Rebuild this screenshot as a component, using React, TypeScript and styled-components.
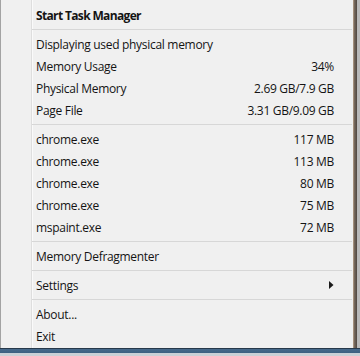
import React from 'react';
import styled, { createGlobalStyle } from 'styled-components';

const GlobalStyle = createGlobalStyle`
  html, body {
    margin: 0;
    padding: 0;
    background: #c2c2c2;
  }
`;

const Screen = styled.div`
  width: 360px;
  height: 356px;
  display: grid;
  grid-template-rows: 348px 1fr;
  overflow: hidden;
  font-family: "Open Sans", "Noto Sans", sans-serif;
`;

const Top = styled.div`
  display: flex;
`;

const Menu = styled.div`
  width: 352px;
  border-left: 1px solid #a3a3a3;
  border-right: 1px solid #a38f7c;
  background: #f0f0f0;
  display: flex;
`;

const Gutter = styled.div`
  width: 30px;
  border-right: 1px solid #dedede;
  box-shadow: 1px 0 0 #fafafa;
`;

const List = styled.div`
  flex: 1;
  padding: 4px 0 1px 0;
  display: flex;
  flex-direction: column;
`;

const Item = styled.div<{ $bold?: boolean }>`
  height: 22px;
  display: flex;
  align-items: center;
  justify-content: space-between;
  padding: 0 19px 0 4px;
  font-size: 12px;
  letter-spacing: ${(p) => (p.$bold ? '-0.65px' : '-0.3px')};
  font-weight: ${(p) => (p.$bold ? 700 : 400)};
  color: #141414;
  white-space: nowrap;
`;

const Value = styled.span`
  text-align: right;
`;

const Separator = styled.div`
  height: 1px;
  background: #d7d7d7;
  margin: 3px 1px 3px 0;
`;

const Edge = styled.div`
  width: 3px;
  background: linear-gradient(to right, #7d6e61, #4f4741);
`;

const Rest = styled.div`
  flex: 1;
  background: #b9b9b9;
`;

const Taskbar = styled.div`
  border-top: 1px solid #27394b;
  background: linear-gradient(to bottom, #46698b 0px, #3c5f80 4px, #c9d0d6 4px);
`;

const Arrow = () => (
  <svg width="5" height="8" viewBox="0 0 5 8">
    <path d="M0 0 L4.5 4 L0 8 Z" fill="#1a1a1a" />
  </svg>
);

const stats = [
  ['Memory Usage', '34%'],
  ['Physical Memory', '2.69 GB/7.9 GB'],
  ['Page File', '3.31 GB/9.09 GB'],
];

const processes = [
  ['chrome.exe', '117 MB'],
  ['chrome.exe', '113 MB'],
  ['chrome.exe', '80 MB'],
  ['chrome.exe', '75 MB'],
  ['mspaint.exe', '72 MB'],
];

export default function App() {
  return (
    <>
      <GlobalStyle />
      <Screen>
        <Top>
          <Menu>
            <Gutter />
            <List>
              <Item $bold>Start Task Manager</Item>
              <Separator />
              <Item>Displaying used physical memory</Item>
              {stats.map(([label, value]) => (
                <Item key={label}>
                  <span>{label}</span>
                  <Value>{value}</Value>
                </Item>
              ))}
              <Separator />
              {processes.map(([name, size], i) => (
                <Item key={i}>
                  <span>{name}</span>
                  <Value>{size}</Value>
                </Item>
              ))}
              <Separator />
              <Item>Memory Defragmenter</Item>
              <Separator />
              <Item>
                <span>Settings</span>
                <Arrow />
              </Item>
              <Separator />
              <Item>About...</Item>
              <Item>Exit</Item>
            </List>
          </Menu>
          <Edge />
          <Rest />
        </Top>
        <Taskbar />
      </Screen>
    </>
  );
}
